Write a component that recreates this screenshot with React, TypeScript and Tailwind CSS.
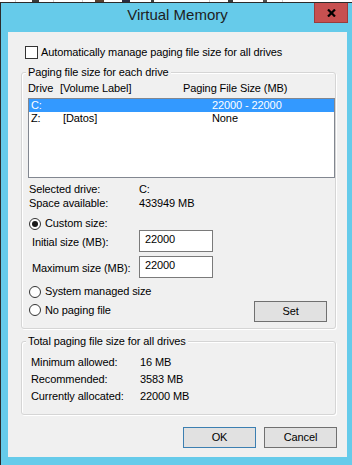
import React from 'react';

// Windows 8 style "Virtual Memory" dialog

const Radio = ({ checked }: { checked?: boolean }) => (
  <span className="w-[12px] h-[12px] rounded-full border border-[#333333] bg-white flex items-center justify-center shrink-0">
    {checked && <span className="w-[6px] h-[6px] rounded-full bg-[#1a1a1a]" />}
  </span>
);

const Button = ({ label, isDefault }: { label: string; isDefault?: boolean }) => (
  <div
    className={`w-[73px] h-[21px] flex items-center justify-center bg-[#e1e1e1] border ${
      isDefault ? 'border-[#3c7fb1]' : 'border-[#707070]'
    }`}
  >
    {label}
  </div>
);

const Group = ({
  label,
  className,
  children,
}: {
  label: string;
  className: string;
  children: React.ReactNode;
}) => (
  <div
    className={`relative ml-[13px] w-[315px] rounded-[3px] border border-[#d5d5d5] shadow-[inset_1px_1px_0_#ffffff,1px_1px_0_#ffffff] ${className}`}
  >
    <span className="absolute left-[4px] top-[-8px] bg-[#f0f0f0] px-[2px] leading-[15px]">{label}</span>
    {children}
  </div>
);

const SizeInput = ({ value }: { value: string }) => (
  <div className="w-[74px] h-[22px] border border-[#7a7a7a] bg-white pl-[5px] pt-[2px] leading-[13px]">
    {value}
  </div>
);

export default function App() {
  return (
    <div className="w-[352px] h-[465px] bg-white overflow-hidden font-['Liberation_Sans',Arial,sans-serif] text-[11px] tracking-[-0.1px] text-black">
      {/* window behind, peeking at the top */}
      <div className="h-[2px] flex">
        <span className="ml-[15px] w-px bg-[#cfcfcf]" />
        <span className="ml-[16px] w-[7px] bg-[#3a3a3a]" />
        <span className="ml-[14px] w-px bg-[#cfcfcf]" />
        <span className="ml-[28px] w-px bg-[#cfcfcf]" />
        <span className="ml-[12px] w-[9px] bg-[#5a4030]" />
        <span className="ml-[18px] w-[8px] bg-[#2a2a40]" />
        <span className="ml-[21px] w-[3px] bg-[#404040]" />
        <span className="ml-[55px] w-px bg-[#cfcfcf]" />
        <span className="ml-[18px] w-[5px] bg-[#3a3a3a]" />
        <span className="ml-[30px] w-[4px] bg-[#505050]" />
        <span className="ml-[15px] w-px bg-[#cfcfcf]" />
      </div>

      <div className="relative flex flex-col h-[463px] border-t border-l border-[#2b2b2b] bg-[#66cbea] pl-[7px] pr-[5px]">
        {/* title bar */}
        <div className="h-[29px] pt-[2px] text-center text-[15px] leading-[20px] tracking-normal text-[#1e1e1e]">
          Virtual Memory
        </div>
        <div className="absolute top-0 right-[4px] w-[34px] h-[20px] bg-[#c75050] border border-t-0 border-[#9a3c3c] flex items-center justify-center pl-[1px]">
          <svg width="9" height="8" viewBox="0 0 9 8">
            <path d="M1 0.5 L8 7.5 M8 0.5 L1 7.5" stroke="#000" strokeWidth="2.2" />
          </svg>
        </div>

        {/* client area */}
        <div className="h-[425px] bg-[#f0f0f0] flex flex-col">
          <div className="mt-[14px] h-[13px] pl-[17px] flex items-center gap-[3px]">
            <span className="w-[13px] h-[13px] border border-[#333333] bg-white shrink-0" />
            <span className="leading-[13px]">Automatically manage paging file size for all drives</span>
          </div>

          <Group label="Paging file size for each drive" className="mt-[13px] h-[257px]">
            <div className="flex pl-[6px] pt-[9px] leading-[13px]">
              <span className="w-[32px]">Drive</span>
              <span className="w-[123px]">[Volume Label]</span>
              <span>Paging File Size (MB)</span>
            </div>

            <div className="mt-[3px] ml-[6px] w-[307px] h-[80px] border border-[#828790] bg-white">
              <div className="flex h-[13px] leading-[13px] bg-[#3399ff] text-white pl-[2px]">
                <span className="w-[32px]">C:</span>
                <span className="w-[149px]" />
                <span>22000 - 22000</span>
              </div>
              <div className="flex h-[13px] leading-[13px] pl-[2px]">
                <span className="w-[32px]">Z:</span>
                <span className="w-[149px]">[Datos]</span>
                <span>None</span>
              </div>
            </div>

            <div className="mt-[4px] pl-[7px] leading-[14px]">
              <div className="flex">
                <span className="w-[110px]">Selected drive:</span>
                <span>C:</span>
              </div>
              <div className="flex">
                <span className="w-[110px]">Space available:</span>
                <span>433949 MB</span>
              </div>
            </div>

            <div className="mt-[7px] h-[13px] pl-[7px] flex items-center gap-[4px]">
              <Radio checked />
              <span className="leading-[13px]">Custom size:</span>
            </div>

            <div className="h-[22px] flex items-center">
              <span className="w-[117px] pl-[10px] pt-[2px] leading-[13px]">Initial size (MB):</span>
              <SizeInput value="22000" />
            </div>
            <div className="mt-[4px] h-[22px] flex items-center">
              <span className="w-[117px] pl-[10px] pt-[2px] leading-[13px]">Maximum size (MB):</span>
              <SizeInput value="22000" />
            </div>

            <div className="mt-[7px] h-[13px] pl-[7px] flex items-center gap-[4px]">
              <Radio />
              <span className="leading-[13px]">System managed size</span>
            </div>

            <div className="mt-[3px] h-[21px] flex items-center justify-between">
              <div className="pl-[7px] mb-[3px] flex items-center gap-[4px]">
                <Radio />
                <span className="leading-[13px]">No paging file</span>
              </div>
              <div className="mr-[8px]">
                <Button label="Set" />
              </div>
            </div>
          </Group>

          <Group label="Total paging file size for all drives" className="mt-[12px] h-[74px]">
            <div className="pt-[12px] pl-[9px]">
              <div className="flex h-[17px] leading-[17px]">
                <span className="w-[109px]">Minimum allowed:</span>
                <span>16 MB</span>
              </div>
              <div className="flex h-[17px] leading-[17px]">
                <span className="w-[109px]">Recommended:</span>
                <span>3583 MB</span>
              </div>
              <div className="flex h-[17px] leading-[17px]">
                <span className="w-[109px]">Currently allocated:</span>
                <span>22000 MB</span>
              </div>
            </div>
          </Group>

          <div className="mt-[12px] flex justify-end gap-[8px] pr-[10px]">
            <Button label="OK" isDefault />
            <Button label="Cancel" />
          </div>
        </div>
      </div>
    </div>
  );
}
